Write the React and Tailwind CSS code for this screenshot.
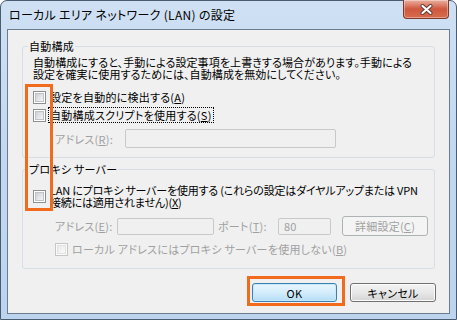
const jp = "font-['Noto_Sans_CJK_JP','Noto_Sans_CJK_SC',sans-serif] [font-feature-settings:'palt']";

function Check({ disabled }) {
  return (
    <span
      className={`box-border flex h-[13px] w-[13px] shrink-0 items-center justify-center border ${
        disabled ? 'border-[#c6c6c6] bg-[#fafafa]' : 'border-[#8e8f8f] bg-white'
      }`}
    >
      <span
        className={`h-[9px] w-[9px] border bg-gradient-to-br ${
          disabled ? 'border-[#e2e2e2] from-[#e8e8e8] to-[#fbfbfb]' : 'border-[#bfc3c8] from-[#cdd0d5] to-[#f6f6f6]'
        }`}
      />
    </span>
  );
}

function CloseButton() {
  return (
    <div className="-mt-px mr-px flex h-[19px] w-[46px] items-center justify-center rounded-b-[4px] border border-t-0 border-[#7d3a2c] bg-gradient-to-b from-[#eab0a2] via-[#cf573d] to-[#d86c4c] shadow-[inset_0_0_0_1px_rgba(255,255,255,0.35)]">
      <svg width="13" height="11" viewBox="0 0 13 11">
        <path d="M2.5 2 L10.5 9 M10.5 2 L2.5 9" stroke="#5a3a34" strokeWidth="4" strokeLinecap="round" />
        <path d="M2.5 2 L10.5 9 M10.5 2 L2.5 9" stroke="#ffffff" strokeWidth="2.2" strokeLinecap="round" />
      </svg>
    </div>
  );
}

export default function App() {
  return (
    <div className={`relative h-[321px] w-[457px] overflow-hidden whitespace-nowrap bg-white text-[11px] leading-[12px] tracking-[0.25px] text-black ${jp}`}>
      <div className="flex h-[320px] w-[457px] flex-col rounded-t-[7px] border border-[#4a5c70] bg-gradient-to-b from-[#cfe0f3] via-[#c2d8f0] to-[#bcd4ee] px-[6px] pb-[5px]">
        {/* title bar */}
        <div className="flex h-[28px] shrink-0 items-start">
          <span className="mt-[6px] pl-[2px] text-[12px] leading-[16px] tracking-[0.3px]">ローカル エリア ネットワーク (LAN) の設定</span>
          <div className="ml-auto">
            <CloseButton />
          </div>
        </div>

        {/* client area */}
        <div className="flex-1 border border-[#6b7c90] bg-[#f0f0f0]">
          {/* 自動構成 */}
          <div className="relative ml-[14px] mt-[16px] h-[112px] w-[413px] rounded-[3px] border border-[#d5dfe5] pl-[10px] pt-[9px]">
            <span className="absolute left-[5px] top-[-7px] bg-[#f0f0f0] px-[1px]">自動構成</span>
            <p className="tracking-[0.1px]">
              自動構成にすると、手動による設定事項を上書きする場合があります。手動による
              <br />
              設定を確実に使用するためには、自動構成を無効にしてください。
            </p>
            <div className="mt-[8px] flex h-[18px] items-center gap-[2px]">
              <Check />
              <span className="border border-transparent px-px">
                設定を自動的に検出する(<u>A</u>)
              </span>
            </div>
            <div className="flex h-[18px] items-center gap-[2px]">
              <Check />
              <span className="border border-dotted border-black px-px py-px">
                自動構成スクリプトを使用する(<u>S</u>)
              </span>
            </div>
            <div className="ml-[22px] mt-[5px] flex items-center">
              <span className="w-[70px] text-[#a0a0a0]">
                アドレス(<u>R</u>):
              </span>
              <span className="h-[19px] w-[211px] rounded-[2px] border border-[#c9c9c9]" />
            </div>
          </div>

          {/* プロキシ サーバー */}
          <div className="relative ml-[14px] mt-[11px] h-[100px] w-[413px] rounded-[3px] border border-[#d5dfe5] pl-[10px] pt-[13px]">
            <span className="absolute left-[5px] top-[-7px] bg-[#f0f0f0] px-[1px]">プロキシ サーバー</span>
            <div className="flex items-center gap-[2px]">
              <Check />
              <span className="border border-transparent px-px tracking-[-0.2px]">
                LAN にプロキシ サーバーを使用する (これらの設定はダイヤルアップまたは VPN
                <br />
                接続には適用されません)(<u>X</u>)
              </span>
            </div>
            <div className="ml-[22px] mt-[7px] flex h-[20px] items-center text-[#a0a0a0]">
              <span className="w-[62px]">
                アドレス(<u>E</u>):
              </span>
              <span className="h-[17px] w-[97px] rounded-[2px] border border-[#c9c9c9]" />
              <span className="ml-[4px] w-[60px]">
                ポート(<u>T</u>):
              </span>
              <span className="flex h-[17px] w-[53px] items-center rounded-[2px] border border-[#c9c9c9] pl-[5px]">80</span>
              <span className="ml-[11px] flex h-[20px] w-[86px] items-center justify-center rounded-[3px] border border-[#adb2b5] bg-[#f4f4f4]">
                詳細設定(<u>C</u>)
              </span>
            </div>
            <div className="ml-[22px] mt-[4px] flex h-[18px] items-center gap-[2px] text-[#a0a0a0]">
              <Check disabled />
              <span className="border border-transparent px-px">
                ローカル アドレスにはプロキシ サーバーを使用しない(<u>B</u>)
              </span>
            </div>
          </div>

          {/* buttons */}
          <div className="mt-[14px] flex justify-end gap-[13px] pr-[13px]">
            <button className="h-[19px] w-[85px] rounded-[3px] border border-[#3c7fb1] bg-gradient-to-b from-[#e9f5fd] via-[#d4edfb] to-[#b4ddf6] shadow-[inset_0_0_0_1px_#c4e8fd]">
              OK
            </button>
            <button className="h-[19px] w-[86px] rounded-[3px] border border-[#707070] bg-gradient-to-b from-[#f3f3f3] via-[#e8e8e8] to-[#d4d4d4] shadow-[inset_0_0_0_1px_#fcfcfc]">
              キャンセル
            </button>
          </div>
        </div>
      </div>

      {/* highlight marks */}
      <div className="absolute left-[25px] top-[84px] h-[127px] w-[28px] border-[3px] border-[#f26b1d]" />
      <div className="absolute left-[247px] top-[276px] h-[30px] w-[98px] border-[3px] border-[#f26b1d]" />
    </div>
  );
}
